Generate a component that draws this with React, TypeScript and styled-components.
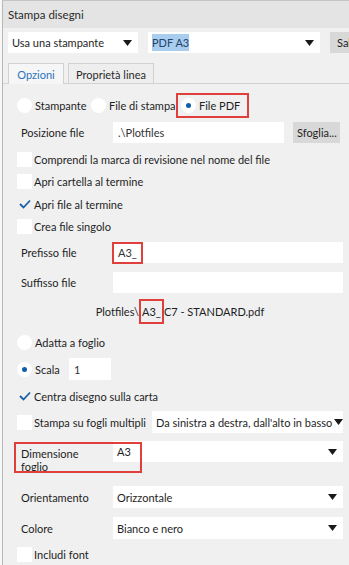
import React from "react";
import styled, { createGlobalStyle, css } from "styled-components";

const GlobalStyle = createGlobalStyle`
  html, body {
    margin: 0;
    padding: 0;
    background: #f7f7f7;
    overflow: hidden;
  }
  body {
    font-family: Lato, "Noto Sans", sans-serif;
    font-size: 11px;
    color: #1e1e1e;
  }
`;

export default function App() {
  return (
    <>
      <GlobalStyle />
      <Frame>
        <TitleBar>Stampa disegni</TitleBar>

        <Toolbar>
          <Select $width={130}>
            <span>Usa una stampante</span>
            <Arrow />
          </Select>
          <Select $width={172}>
            <Selected>PDF A3</Selected>
            <Arrow />
          </Select>
          <Button $width={30} $pl={7}>
            Salva
          </Button>
        </Toolbar>

        <TabBar>
          <Tab $active $width={56}>
            Opzioni
          </Tab>
          <Tab $width={86}>Proprietà linea</Tab>
        </TabBar>

        <Content>
          <Row $mt={9} $h={25}>
            <Radio />
            <OptionLabel $w={56}>Stampante</OptionLabel>
            <Radio />
            <OptionLabel $w={67}>File di stampa</OptionLabel>
            <RedBox>
              <Radio $checked />
              <OptionLabel>File PDF</OptionLabel>
            </RedBox>
          </Row>

          <Row $mt={4} $h={21}>
            <FieldLabel>Posizione file</FieldLabel>
            <Input $width={171}>.\Plotfiles</Input>
            <Button $width={47} $ml={9}>
              Sfoglia...
            </Button>
          </Row>

          <Row $mt={6} $h={21}>
            <Check />
            <OptionLabel>Comprendi la marca di revisione nel nome del file</OptionLabel>
          </Row>
          <Row>
            <Check />
            <OptionLabel>Apri cartella al termine</OptionLabel>
          </Row>
          <Row $mt={1}>
            <Check $checked />
            <OptionLabel>Apri file al termine</OptionLabel>
          </Row>
          <Row>
            <Check />
            <OptionLabel>Crea file singolo</OptionLabel>
          </Row>

          <Row $mt={5} $h={21}>
            <FieldLabel>Prefisso file</FieldLabel>
            <Input>
              <InputMark>A3_</InputMark>
            </Input>
          </Row>
          <Row $mt={9} $h={21}>
            <FieldLabel>Suffisso file</FieldLabel>
            <Input />
          </Row>

          <PathLine>
            Plotfiles\<PathMark>A3_</PathMark>C7 - STANDARD.pdf
          </PathLine>

          <Row $mt={7}>
            <Radio />
            <OptionLabel>Adatta a foglio</OptionLabel>
          </Row>
          <Row $mt={5}>
            <Radio $checked />
            <OptionLabel $w={34}>Scala</OptionLabel>
            <Input $width={42} $h={22}>
              1
            </Input>
          </Row>
          <Row $mt={5}>
            <Check $checked />
            <OptionLabel>Centra disegno sulla carta</OptionLabel>
          </Row>
          <Row $mt={4}>
            <Check />
            <OptionLabel>Stampa su fogli multipli</OptionLabel>
            <Select $h={22} $width={191} $push>
              <span>Da sinistra a destra, dall'alto in basso</span>
              <Arrow />
            </Select>
          </Row>

          <FieldRow>
            <FieldLabel $top>
              Dimensione
              <br />
              foglio
            </FieldLabel>
            <Select $grow>
              <span>A3</span>
              <Arrow />
            </Select>
            <Highlight />
          </FieldRow>

          <Row $mt={13}>
            <FieldLabel>Orientamento</FieldLabel>
            <Select $h={22} $grow>
              <span>Orizzontale</span>
              <Arrow />
            </Select>
          </Row>
          <Row $mt={9}>
            <FieldLabel>Colore</FieldLabel>
            <Select $h={22} $grow>
              <span>Bianco e nero</span>
              <Arrow />
            </Select>
          </Row>
          <Row $mt={4}>
            <Check />
            <OptionLabel>Includi font</OptionLabel>
          </Row>
        </Content>
      </Frame>
    </>
  );
}

const Arrow = () => (
  <ArrowSvg width="9" height="6" viewBox="0 0 9 6">
    <polygon points="0,0 9,0 4.5,6" fill="#1a1a1a" />
  </ArrowSvg>
);

const Radio = ({ $checked }: { $checked?: boolean }) => (
  <RadioCircle>{$checked && <RadioDot />}</RadioCircle>
);

const Check = ({ $checked }: { $checked?: boolean }) =>
  $checked ? (
    <CheckBox $checked>
      <svg width="12" height="10" viewBox="0 0 12 10">
        <polyline
          points="1,5 4.5,8.5 11,1.5"
          fill="none"
          stroke="#1b5fa6"
          strokeWidth="1.8"
        />
      </svg>
    </CheckBox>
  ) : (
    <CheckBox />
  );

//******** Styles ********//

const Frame = styled.div`
  margin-left: 2px;
  width: 347px;
  height: 565px;
  background: #f0f0f0;
  border-left: 1px solid #b8b8b8;
  border-top: 1px solid #c4c4c4;
  box-sizing: border-box;
  overflow: hidden;
`;

const TitleBar = styled.div`
  height: 27px;
  display: flex;
  align-items: center;
  padding-left: 5px;
  background: #e4e4e4;
  color: #2a2a2a;
  font-size: 11.5px;
`;

const Toolbar = styled.div`
  display: flex;
  align-items: center;
  gap: 10px;
  padding: 4px 0 0 5px;
`;

const field = css`
  box-sizing: border-box;
  background: #fff;
  display: flex;
  align-items: center;
  white-space: nowrap;
`;

const Select = styled.div<{
  $width?: number;
  $h?: number;
  $grow?: boolean;
  $push?: boolean;
}>`
  ${field};
  height: ${(p) => p.$h ?? 21}px;
  width: ${(p) => (p.$width ? `${p.$width}px` : "auto")};
  flex: ${(p) => (p.$grow ? "1" : "none")};
  margin-left: ${(p) => (p.$push ? "auto" : "0")};
  justify-content: space-between;
  padding: 0 6px 0 4px;
  overflow: hidden;
`;

const ArrowSvg = styled.svg`
  flex: none;
  margin-left: 2px;
`;

const Selected = styled.span`
  background: #a9cdef;
  color: #23446b;
  padding: 2px 0;
`;

const Button = styled.div<{ $width: number; $ml?: number; $pl?: number }>`
  height: 21px;
  width: ${(p) => p.$width}px;
  flex: none;
  margin-left: ${(p) => p.$ml ?? 0}px;
  background: #d8d8d8;
  display: flex;
  align-items: center;
  padding-left: ${(p) => p.$pl ?? 4}px;
  box-sizing: border-box;
  white-space: nowrap;
  overflow: hidden;
`;

const TabBar = styled.div`
  display: flex;
  gap: 4px;
  margin-top: 10px;
  padding-left: 5px;
  height: 20px;
  border-bottom: 1px solid #d2d2d2;
`;

const Tab = styled.div<{ $active?: boolean; $width: number }>`
  box-sizing: border-box;
  width: ${(p) => p.$width}px;
  display: flex;
  align-items: center;
  justify-content: center;
  border: 1px solid #d2d2d2;
  border-bottom: none;
  background: ${(p) => (p.$active ? "#f6f6f6" : "#eeeeee")};
  color: ${(p) => (p.$active ? "#2b74bd" : "#2a2a2a")};
  margin-bottom: ${(p) => (p.$active ? "-1px" : "0")};
  height: ${(p) => (p.$active ? "21px" : "20px")};
  padding-top: 1px;
  ${(p) => (p.$active ? "padding-bottom: 1px;" : "")}
`;

const Content = styled.div`
  display: flex;
  flex-direction: column;
  padding: 0 6px 0 14px;
`;

const Row = styled.div<{ $mt?: number; $h?: number }>`
  display: flex;
  align-items: center;
  flex: none;
  height: ${(p) => p.$h ?? 22}px;
  margin-top: ${(p) => p.$mt ?? 0}px;
`;

const FieldRow = styled.div`
  position: relative;
  display: flex;
  align-items: flex-start;
  flex: none;
  height: 32px;
  margin-top: 8px;
`;

const Highlight = styled.div`
  position: absolute;
  left: -3px;
  top: 1px;
  width: 128px;
  height: 31px;
  box-sizing: border-box;
  border: 2px solid #e0403c;
  pointer-events: none;
`;

const RadioCircle = styled.span`
  width: 15px;
  height: 15px;
  flex: none;
  border-radius: 50%;
  background: #fff;
  display: flex;
  align-items: center;
  justify-content: center;
  margin-right: 3px;
`;

const RadioDot = styled.span`
  width: 5px;
  height: 5px;
  border-radius: 50%;
  background: #0f5ea9;
`;

const CheckBox = styled.span<{ $checked?: boolean }>`
  width: 15px;
  height: 15px;
  flex: none;
  background: ${(p) => (p.$checked ? "transparent" : "#fff")};
  display: flex;
  align-items: center;
  justify-content: center;
  margin-right: 2px;
`;

const OptionLabel = styled.span<{ $w?: number }>`
  white-space: nowrap;
  flex: none;
  width: ${(p) => (p.$w ? `${p.$w}px` : "auto")};
  margin-right: ${(p) => (p.$w ? 0 : 3)}px;
`;

const RedBox = styled.span`
  display: flex;
  align-items: center;
  height: 25px;
  box-sizing: border-box;
  padding: 0 4px 0 3px;
  border: 2px solid #e0403c;
`;

const FieldLabel = styled.span<{ $top?: boolean }>`
  width: 96px;
  flex: none;
  padding-left: 4px;
  box-sizing: border-box;
  white-space: nowrap;
  line-height: ${(p) => (p.$top ? "13px" : "normal")};
  padding-top: ${(p) => (p.$top ? "6px" : "0")};
`;

const Input = styled.div<{ $width?: number; $h?: number }>`
  ${field};
  height: ${(p) => p.$h ?? 21}px;
  width: ${(p) => (p.$width ? `${p.$width}px` : "auto")};
  flex: ${(p) => (p.$width ? "none" : "1")};
  padding: 0 5px;
  color: #333;
`;

const InputMark = styled.span`
  margin-left: -6px;
  padding: 0 4px 0 4px;
  height: 22px;
  display: flex;
  align-items: center;
  border: 2px solid #e0403c;
  box-sizing: border-box;
`;

const PathLine = styled.div`
  margin-top: 6px;
  height: 25px;
  flex: none;
  display: flex;
  align-items: center;
  justify-content: center;
  white-space: nowrap;
`;

const PathMark = styled.span`
  display: inline-flex;
  align-items: center;
  height: 25px;
  box-sizing: border-box;
  border: 2px solid #e0403c;
  padding: 0 1px;
`;
